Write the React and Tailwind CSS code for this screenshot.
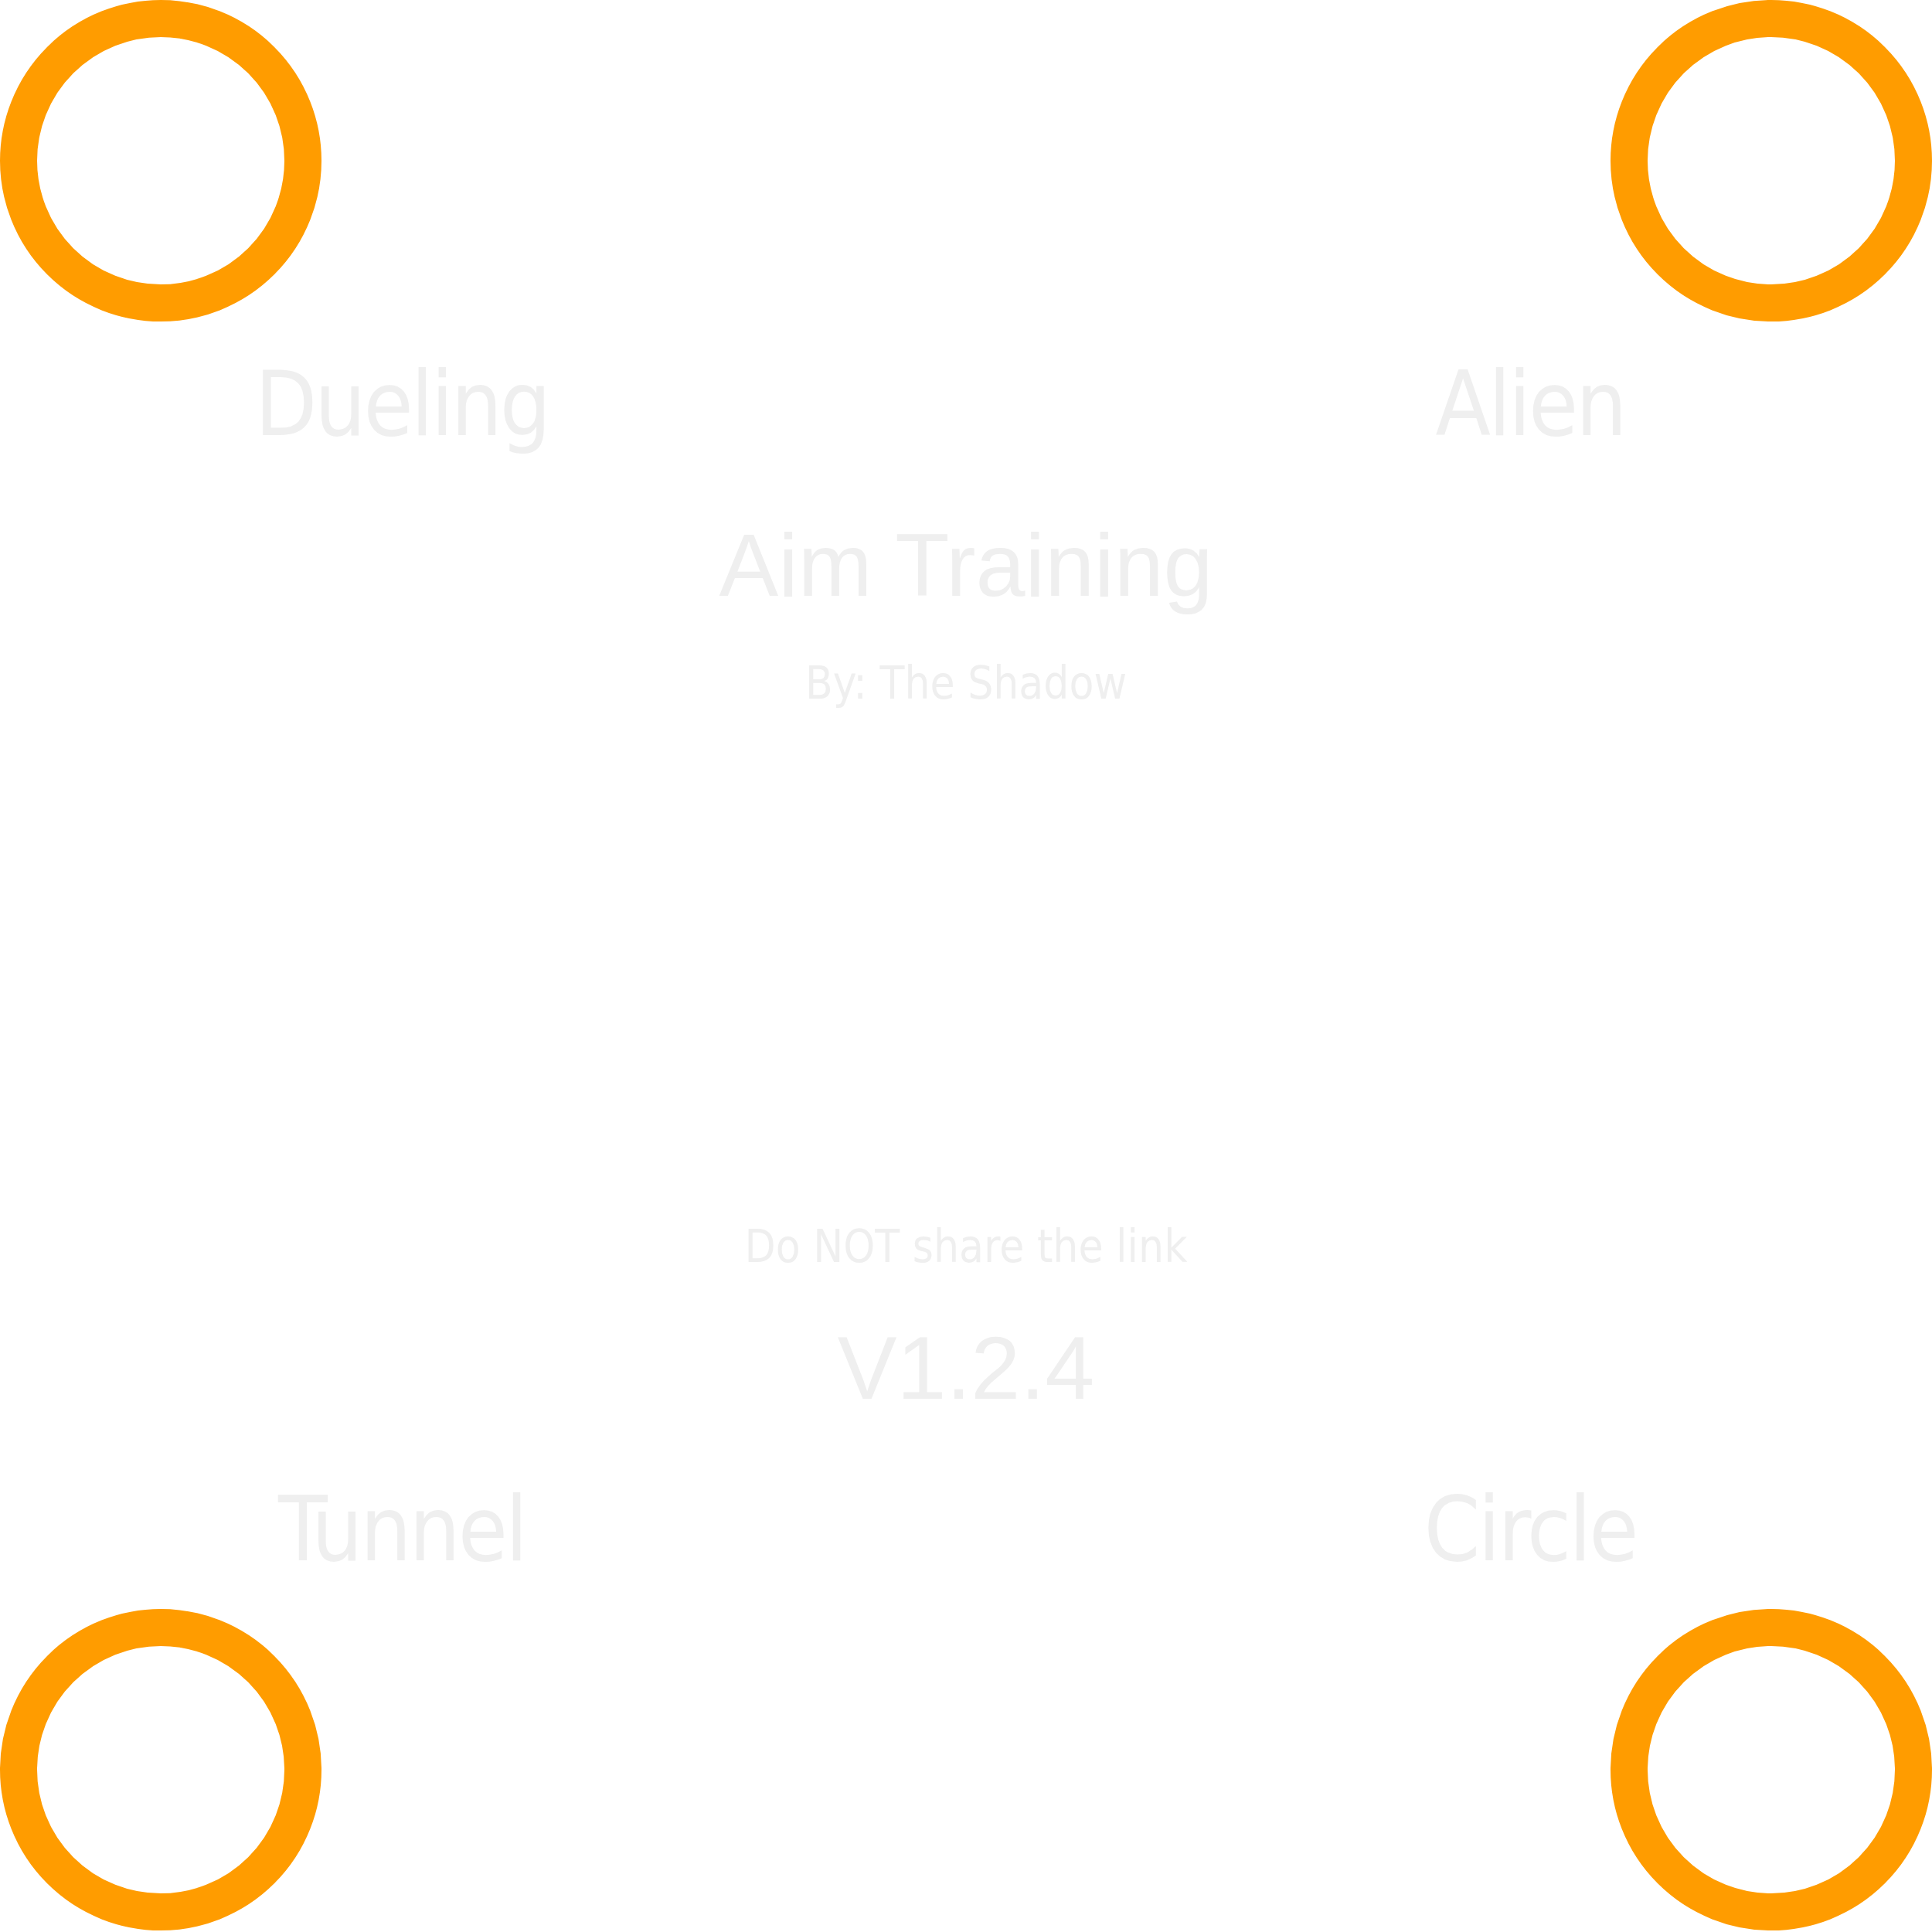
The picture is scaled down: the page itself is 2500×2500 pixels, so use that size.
export default function App() {
  const ring =
    "w-[416px] h-[416px] rounded-full border-[48px] border-[#ff9c00] bg-white shrink-0";
  const label =
    "w-[1040px] text-center text-[116px] leading-[135px] tracking-[-3px] whitespace-nowrap";
  const arial =
    "font-['Liberation_Sans',Arial,sans-serif] text-center text-[115px] leading-[132px] whitespace-nowrap";
  const small = "text-center text-[58px] leading-[68px] whitespace-nowrap";

  return (
    <div className="w-[2500px] h-[2500px] bg-white flex flex-col text-[#efefef] overflow-hidden font-['DejaVu_Sans_Condensed','DejaVu_Sans',sans-serif]">
      {/* top targets */}
      <div className="flex justify-between">
        <div className={ring} />
        <div className={ring} />
      </div>

      <div className="flex justify-between mt-[39px]">
        <div className={label}>Dueling</div>
        <div className={label}>Alien</div>
      </div>

      {/* title */}
      <div className={`mt-[75px] ${arial}`}>Aim Training</div>
      <div className={`mt-[53px] ${small}`}>By: The Shadow</div>

      <div className={`mt-[661px] ${small}`}>Do NOT share the link</div>
      <div className={`mt-[57px] ${arial}`}>V1.2.4</div>

      <div className="flex justify-between mt-[75px]">
        <div className={label}>Tunnel</div>
        <div className={label}>Circle</div>
      </div>

      {/* bottom targets */}
      <div className="flex justify-between mt-[36px]">
        <div className={ring} />
        <div className={ring} />
      </div>
    </div>
  );
}
